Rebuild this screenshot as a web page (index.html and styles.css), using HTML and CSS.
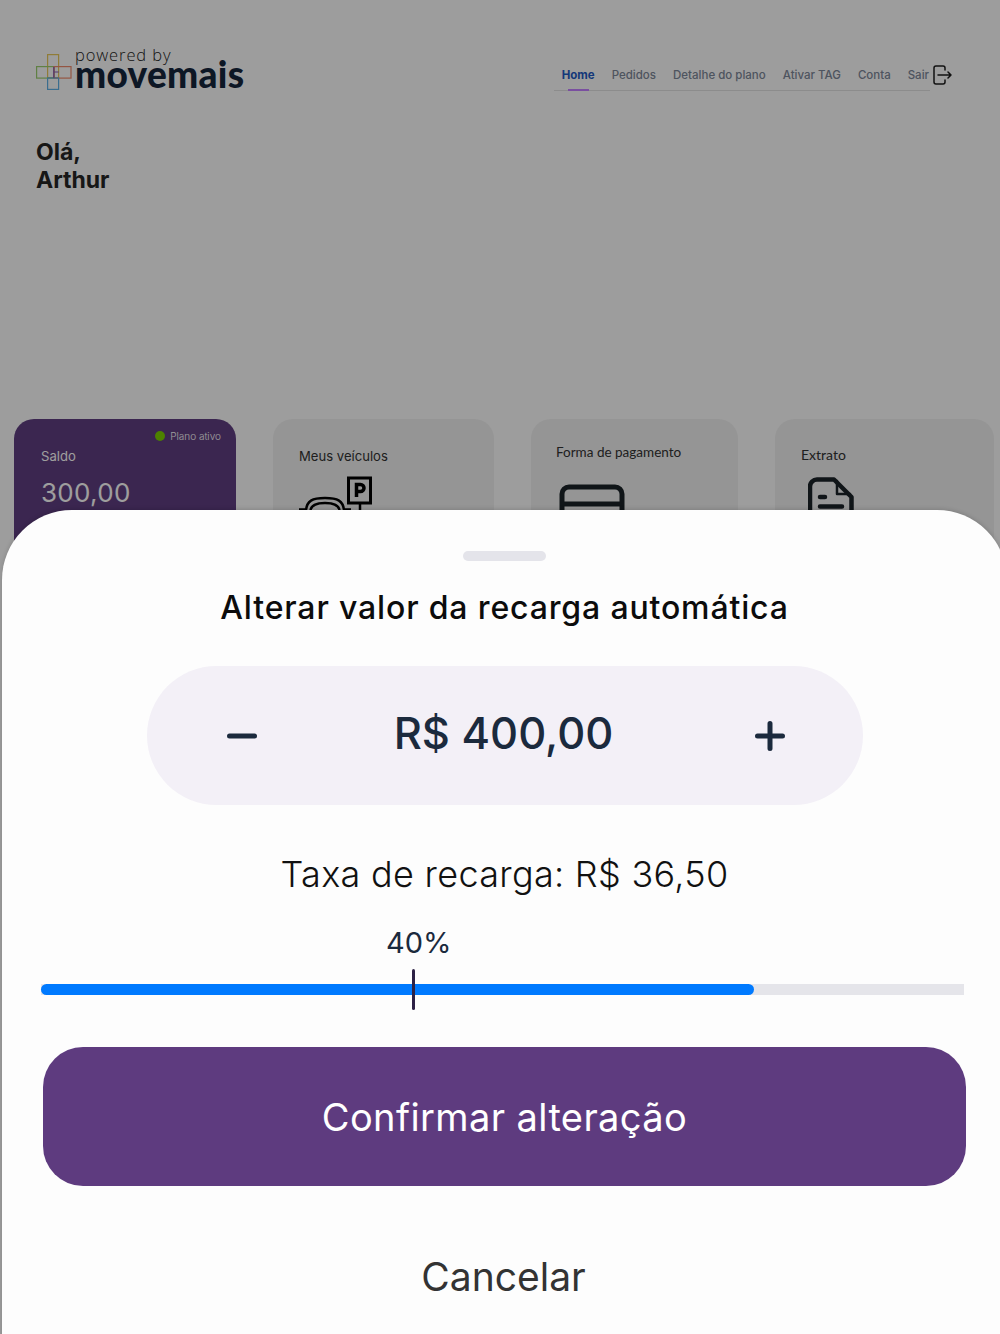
FILE: index.html
```html
<!DOCTYPE html>
<html lang="pt-BR">
<head>
    <meta charset="UTF-8">
    <meta name="viewport" content="width=device-width, initial-scale=1.0">
    <title>Alterar valor da recarga</title>
    <link rel="stylesheet" href="styles.css">
</head>
<body>
    <div class="page">
        <header class="topbar">
            <div class="logo">
                <svg class="logo-mark" width="36" height="36" viewBox="0 0 36 36" fill="none" stroke-width="1.2">
                    <rect x="11.6" y="0.6" width="11" height="23" stroke="#e8c85a"/>
                    <rect x="0.6" y="12.6" width="17.5" height="11.5" stroke="#9bcf6e"/>
                    <rect x="18" y="12.6" width="17" height="11.5" stroke="#ef8a6c"/>
                    <rect x="11.6" y="24" width="11" height="11.4" stroke="#5fb0e6"/>
                    <path d="M17.8 13v11M17.8 18h5" stroke="#8a5bb5"/>
                </svg>
                <div class="logo-text">
                    <span class="logo-powered">powered by</span>
                    <span class="logo-name">movemais</span>
                </div>
            </div>
            <nav class="nav">
                <a class="nav-item active">Home</a>
                <a class="nav-item">Pedidos</a>
                <a class="nav-item">Detalhe do plano</a>
                <a class="nav-item">Ativar TAG</a>
                <a class="nav-item">Conta</a>
                <a class="nav-item nav-exit">Sair</a>
                <svg class="exit-icon" width="20" height="20" viewBox="0 0 20 20" fill="none" stroke="#1c1c1c" stroke-width="1.5" stroke-linecap="round" stroke-linejoin="round">
                    <path d="M13 5V3a2 2 0 0 0-2-2H4a2 2 0 0 0-2 2v14a2 2 0 0 0 2 2h7a2 2 0 0 0 2-2v-2"/>
                    <path d="M6 10H19M16 7l3 3-3 3"/>
                </svg>
            </nav>
        </header>

        <h1 class="greeting">Olá,<br>Arthur</h1>

        <section class="cards">
            <div class="card card-balance">
                <div class="plan-status"><span class="plan-dot"></span>Plano ativo</div>
                <p class="card-title">Saldo</p>
                <p class="balance-value">300,00</p>
            </div>
            <div class="card">
                <p class="card-title">Meus veículos</p>
                <svg class="card-icon icon-car" width="76" height="50" viewBox="0 0 76 50" fill="none" stroke="#000" stroke-width="2.500">
                    <rect x="49.500" y="2" width="22" height="25" stroke-width="3"/>
                    <path d="M57.500 21V8.500h4a3.500 3.500 0 0 1 0 7h-4" stroke-width="3.500"/>
                    <path d="M61 27v20"/>
                    <path d="M7 34C8 25 13 22 26 22s18 3 19 12M11.500 34c1-5 5-7 14.500-7s13.500 2 14.500 7M0 33.500h6M46 33.500h6"/>
                </svg>
            </div>
            <div class="card card-alt">
                <p class="card-title">Forma de pagamento</p>
                <svg class="card-icon icon-card" width="66" height="50" viewBox="0 0 66 50" fill="none" stroke="#1b2228" stroke-width="5">
                    <rect x="3" y="3" width="60" height="44" rx="7"/>
                    <path d="M3 20h60"/>
                </svg>
            </div>
            <div class="card card-alt card-statement">
                <p class="card-title card-title-low">Extrato</p>
                <svg class="card-icon icon-doc" width="46" height="50" viewBox="0 0 46 50" fill="none" stroke="#1b2228" stroke-width="4.500" stroke-linecap="round" stroke-linejoin="round">
                    <path d="M9 2.500h17L43.500 20v24a6 6 0 0 1-6 6H8a6 6 0 0 1-6-6V9.500a7 7 0 0 1 7-7z"/>
                    <path d="M29 4v13h13" stroke-width="2.500"/>
                    <path d="M12 20h5M12 29.500h22"/>
                </svg>
            </div>
        </section>

        <div class="overlay"></div>

        <section class="sheet">
            <div class="sheet-handle"></div>
            <h2 class="sheet-title">Alterar valor da recarga automática</h2>

            <div class="stepper">
                <span class="stepper-btn"><svg width="32" height="32" viewBox="0 0 32 32" stroke="#1b2a3d" stroke-width="5" stroke-linecap="round"><path d="M3.500 16h25"/></svg></span>
                <span class="stepper-value">R$ 400,00</span>
                <span class="stepper-btn"><svg width="32" height="32" viewBox="0 0 32 32" stroke="#1b2a3d" stroke-width="5" stroke-linecap="round"><path d="M3.500 16h25M16 3.500v25"/></svg></span>
            </div>

            <p class="fee">Taxa de recarga: R$ 36,50</p>

            <div class="slider">
                <div class="slider-track">
                    <div class="slider-fill" style="width: 77.3%"></div>
                </div>
                <div class="slider-thumb" style="left: 40.2%">
                    <span class="slider-label">40%</span>
                </div>
            </div>

            <button class="btn-confirm">Confirmar alteração</button>
            <button class="btn-cancel">Cancelar</button>
        </section>
    </div>
</body>
</html>
```

FILE: styles.css
```css
* {
    box-sizing: border-box;
}
html, body {
    margin: 0;
    padding: 0;
}
body {
    font-family: "Inter", "Liberation Sans", sans-serif;
    background: #fdfdfd;
}
.page {
    position: relative;
    width: 1000px;
    height: 1334px;
    overflow: hidden;
    background: #fdfdfd;
}

/* page behind the sheet */
.topbar {
    display: flex;
    justify-content: space-between;
    padding: 48px 48px 0 36px;
    height: 138px;
}
.logo {
    display: flex;
    align-items: flex-start;
    gap: 3px;
}
.logo-mark {
    margin-top: 6px;
}
.logo-text {
    display: flex;
    flex-direction: column;
}
.logo-powered {
    font-family: "Open Sans", sans-serif;
    font-size: 16.500px;
    font-weight: 300;
    line-height: 14px;
    letter-spacing: 0.900px;
    color: #222;
}
.logo-name {
    font-family: "Lato", sans-serif;
    font-size: 37px;
    font-weight: 900;
    line-height: 23px;
    letter-spacing: 0.300px;
    color: #15263c;
}
.nav {
    display: flex;
    align-items: center;
    gap: 17px;
    height: 43px;
    padding: 10px 0 0 8px;
    position: relative;
}
.nav::after {
    content: "";
    position: absolute;
    left: 0;
    right: 22px;
    bottom: 0;
    height: 1px;
    background: #e2e2e2;
}
.nav-item {
    position: relative;
    font-size: 11.500px;
    font-weight: 500;
    color: #7d8899;
}
.nav-item.active {
    color: #1f5bc4;
    font-weight: 700;
}
.nav-item.active::after {
    content: "";
    position: absolute;
    left: 6px;
    right: 6px;
    bottom: -9px;
    height: 2px;
    background: #7a4fa0;
    z-index: 1;
}
.nav-exit {
    margin-right: -14px;
}
.greeting {
    margin: 0 0 0 36px;
    font-size: 23px;
    font-weight: 700;
    line-height: 28px;
    color: #262626;
}
.cards {
    display: grid;
    grid-template-columns: 222px 221px 207px 219px;
    gap: 37px;
    margin-top: 225px;
    padding-left: 14px;
}
.card {
    height: 200px;
    padding: 28px 26px;
    border-radius: 20px;
    background: #f0f0f0;
}
.card-balance {
    position: relative;
    padding-left: 27px;
    background: #5f3e81;
}
.card-title {
    margin: 0;
    font-size: 13.100px;
    line-height: 18px;
    color: #333;
}
.card-alt {
    padding-left: 25px;
}
.card-statement {
    padding-left: 26px;
}
.card-alt .card-title {
    font-family: "Lato", sans-serif;
    margin-top: -4px;
    font-size: 13.500px;
}
.card-alt .card-title-low {
    margin-top: -1px;
    font-size: 14px;
}
.card-balance .card-title {
    color: #fff;
}
.balance-value {
    margin: 10px 0 0;
    font-size: 26px;
    line-height: 36px;
    letter-spacing: 0.300px;
    color: #fff;
}
.plan-status {
    position: absolute;
    top: 11px;
    right: 15px;
    display: flex;
    align-items: center;
    gap: 5px;
    font-size: 10px;
    font-weight: 300;
    line-height: 12px;
    color: #fff;
}
.plan-dot {
    width: 10px;
    height: 10px;
    border-radius: 50%;
    background: #7cd000;
}
.card-icon {
    display: block;
}
.icon-car {
    margin-top: 11px;
}
.icon-card {
    margin-top: 23px;
    margin-left: 3px;
}
.icon-doc {
    margin-top: 13px;
    margin-left: 7px;
}
.overlay {
    position: absolute;
    inset: 0;
    background: rgba(0, 0, 0, 0.38);
}

/* bottom sheet */
.sheet {
    position: absolute;
    top: 510px;
    left: 2px;
    width: 1005px;
    height: 840px;
    padding: 41px 41px 0;
    border-radius: 70px 70px 0 0;
    background: #fdfdfd;
    display: flex;
    flex-direction: column;
    align-items: center;
    box-shadow: 0 -1px 4px rgba(0,0,0,0.15);
}
.sheet-handle {
    width: 83px;
    height: 10px;
    border-radius: 5px;
    background: #e4e4ea;
}
.sheet-title {
    margin: 26px 0 0;
    font-size: 32px;
    font-weight: 500;
    line-height: 42px;
    letter-spacing: 0.850px;
    color: #0c0c0c;
    white-space: nowrap;
}
.stepper {
    display: flex;
    align-items: center;
    justify-content: space-between;
    width: 716px;
    height: 139px;
    margin: 37px 0 0 1px;
    padding: 0 77px 0 79px;
    border-radius: 70px;
    background: #f3f0f7;
}
.stepper-btn {
    display: flex;
}
.stepper-value {
    margin: 0 5px 6px 0;
    font-size: 43.500px;
    font-weight: 500;
    color: #1b2a3d;
}
.fee {
    margin: 46px 0 0;
    font-size: 36px;
    font-weight: 300;
    line-height: 46px;
    letter-spacing: 0.300px;
    color: #111;
}
.slider {
    position: relative;
    align-self: stretch;
    height: 41px;
    margin: 72px 2px 0 -2px;
    display: flex;
    align-items: center;
}
.slider-track {
    width: 100%;
    height: 11px;
    background: #e5e5ea;
}
.slider-fill {
    height: 100%;
    border-radius: 6px;
    background: #007aff;
}
.slider-thumb {
    position: absolute;
    top: 0;
    width: 3px;
    height: 41px;
    border-radius: 2px;
    background: #2d2145;
}
.slider-label {
    position: absolute;
    bottom: 49px;
    left: -26px;
    font-size: 29px;
    font-weight: 400;
    line-height: 36px;
    color: #1b2a3d;
}
.btn-confirm {
    width: 923px;
    height: 139px;
    margin-top: 37px;
    border: 0;
    border-radius: 40px;
    background: #5e3b7f;
    color: #fff;
    font-family: inherit;
    font-size: 38px;
    font-weight: 400;
    letter-spacing: 0.400px;
}
.btn-cancel {
    margin: 67px 2px 0 0;
    padding: 0;
    border: 0;
    background: none;
    color: #333;
    font-family: inherit;
    font-size: 39px;
    font-weight: 400;
    line-height: 48px;
}
```
